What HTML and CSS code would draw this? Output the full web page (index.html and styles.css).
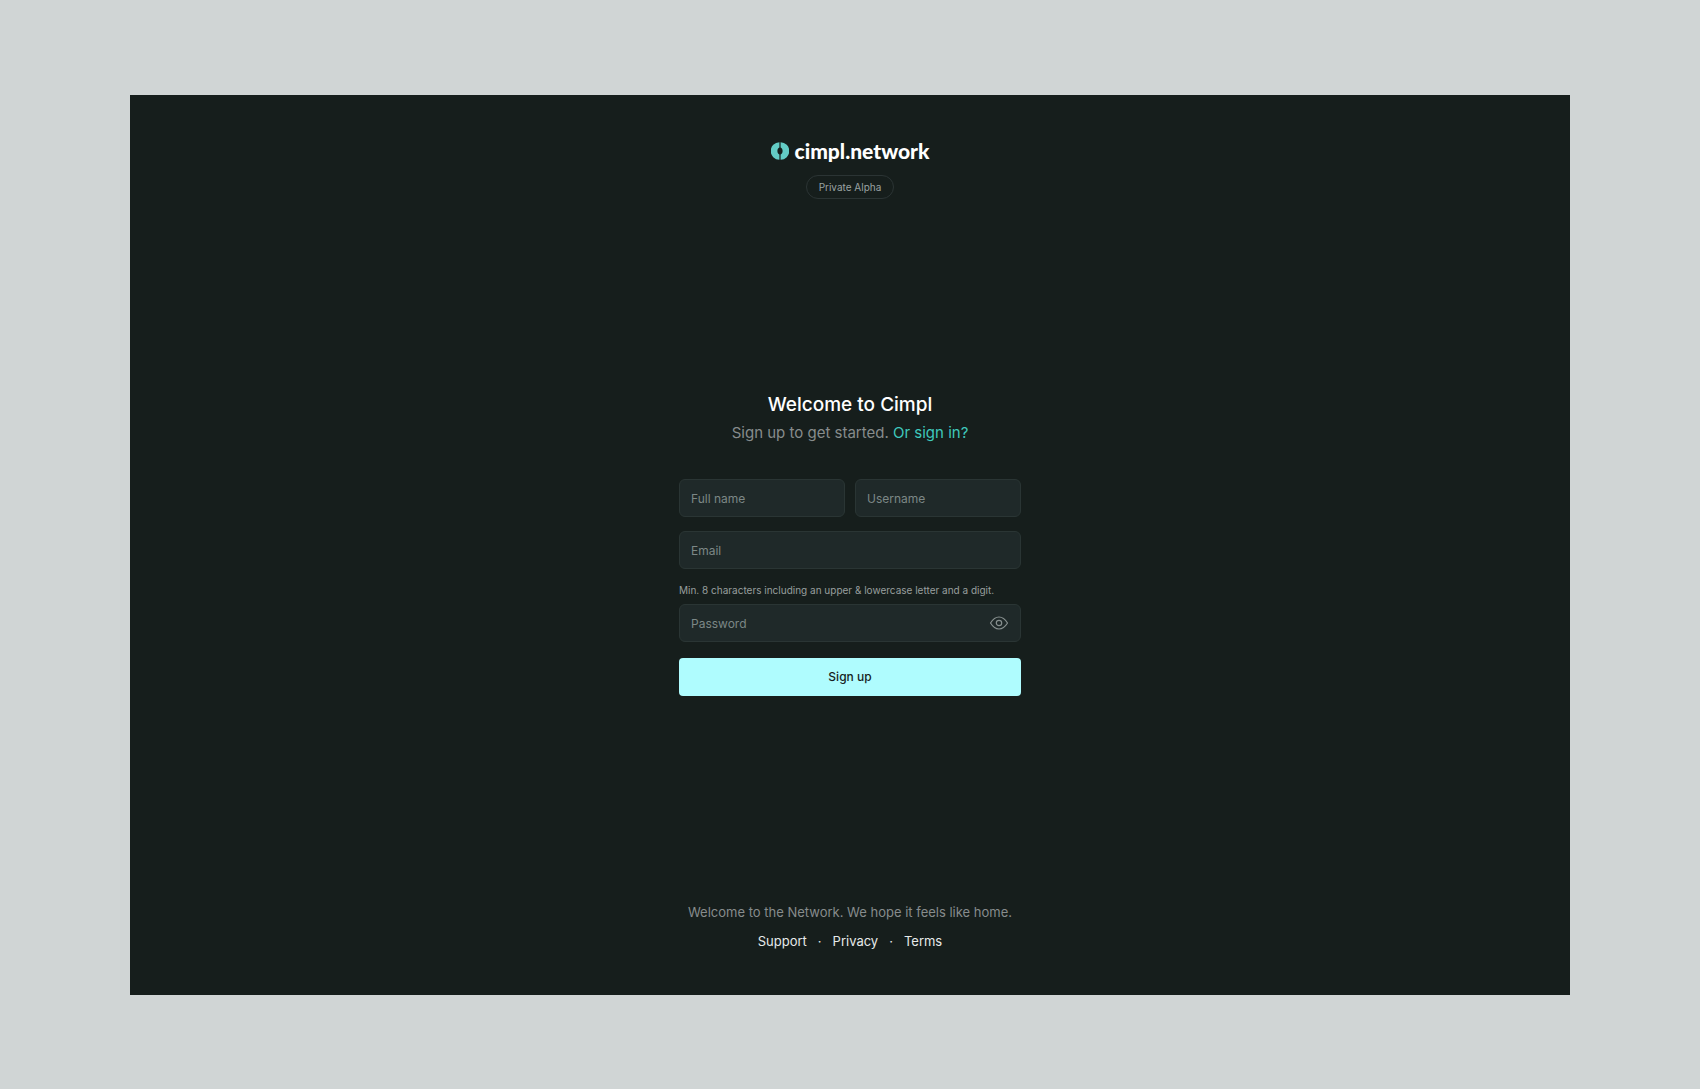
FILE: index.html
```html
<!DOCTYPE html>
<html lang="en">
<head>
    <meta charset="UTF-8">
    <meta name="viewport" content="width=device-width, initial-scale=1.0">
    <title>Sign up - cimpl.network</title>
    <link rel="stylesheet" href="styles.css">
</head>
<body>
    <div class="panel">
        <header class="header">
            <a href="#" class="logo">
                <svg class="logo-mark" viewBox="0 0 18 18" aria-hidden="true">
                    <path d="M8.400 0.300A8.700 8.700 0 0 0 8.400 17.700V12.400C7.200 12 6.400 10.600 6.400 9S7.200 6 8.400 5.600Z"/>
                    <path d="M9.600 0.300A8.700 8.700 0 0 1 9.600 17.700V12.400C10.800 12 11.600 10.600 11.600 9S10.800 6 9.600 5.600Z"/>
                </svg>
                <span class="logo-text">cimpl.network</span>
            </a>
            <span class="badge">Private Alpha</span>
        </header>

        <main class="signup">
            <h1>Welcome to Cimpl</h1>
            <p class="subtitle">Sign up to get started. <a href="#">Or sign in?</a></p>

            <form class="form">
                <div class="row">
                    <input type="text" class="field" placeholder="Full name" aria-label="Full name">
                    <input type="text" class="field" placeholder="Username" aria-label="Username">
                </div>
                <input type="email" class="field" placeholder="Email" aria-label="Email">
                <div class="password">
                    <label for="password">Min. 8 characters including an upper &amp; lowercase letter and a digit.</label>
                    <div class="password-box">
                        <input type="password" class="field" id="password" placeholder="Password">
                        <button type="button" class="toggle" aria-label="Show password">
                            <svg viewBox="0 0 20 16" aria-hidden="true">
                                <path d="M1.500 8C4 4 6.700 2 10 2s6 2 8.500 6c-2.500 4-5.200 6-8.500 6S4 12 1.500 8Z"/>
                                <circle cx="10" cy="8" r="2.700"/>
                            </svg>
                        </button>
                    </div>
                </div>
                <button type="submit" class="submit">Sign up</button>
            </form>
        </main>

        <footer class="footer">
            <p>Welcome to the Network. We hope it feels like home.</p>
            <nav class="links">
                <a href="#">Support</a>
                <span>·</span>
                <a href="#">Privacy</a>
                <span>·</span>
                <a href="#">Terms</a>
            </nav>
        </footer>
    </div>

    <script>
        const password = document.getElementById('password');

        document.querySelector('.toggle').addEventListener('click', () => {
            password.type = password.type === 'password' ? 'text' : 'password';
        });
    </script>
</body>
</html>
```

FILE: styles.css
```css
* {
    box-sizing: border-box;
}

body {
    font-family: Inter, 'Liberation Sans', Arial, sans-serif;
    display: flex;
    min-height: 100vh;
    margin: 0;
    padding: 95px 130px 94px;
    background: #d0d5d5;
}

h1,
p {
    margin: 0;
}

a {
    text-decoration: none;
}

.panel {
    flex: 1;
    display: flex;
    flex-direction: column;
    align-items: center;
    justify-content: space-between;
    padding: 44px 20px;
    background: #161e1c;
}

.header {
    display: flex;
    flex-direction: column;
    align-items: center;
    gap: 12px;
}

.logo {
    display: flex;
    align-items: center;
    gap: 6px;
    height: 24px;
    color: #fff;
}

.logo-mark {
    width: 18px;
    height: 18px;
    fill: #63ccc5;
}

.logo-text {
    font-family: Lato, sans-serif;
    font-size: 21px;
    font-weight: 900;
    line-height: 24px;
}

.badge {
    padding: 0 12px;
    border: 1px solid #2b3434;
    border-radius: 12px;
    font-size: 10px;
    line-height: 22px;
    color: #9aa3a2;
}

.signup {
    width: 100%;
    max-width: 342px;
    padding-bottom: 15px;
    text-align: center;
}

h1 {
    font-size: 19px;
    font-weight: 500;
    line-height: 28px;
    color: #fff;
}

.subtitle {
    margin-top: 2px;
    font-size: 15px;
    line-height: 24px;
    color: #878c8c;
}

.subtitle a {
    color: #3fc9bd;
}

.form {
    display: flex;
    flex-direction: column;
    gap: 14px;
    margin-top: 34px;
}

.row {
    display: grid;
    grid-template-columns: 1fr 1fr;
    gap: 10px;
}

.field {
    width: 100%;
    height: 38px;
    padding: 2px 11px 0;
    background: #1f2929;
    border: 1px solid #2a3534;
    border-radius: 6px;
    font-family: inherit;
    font-size: 12px;
    color: #fff;
}

.field::placeholder {
    color: #7c8786;
    opacity: 1;
}

.password label {
    display: block;
    margin-bottom: 7px;
    font-size: 10px;
    line-height: 14px;
    text-align: left;
    color: #989f9e;
}

.password-box {
    position: relative;
}

.toggle {
    position: absolute;
    top: 0;
    right: 0;
    display: flex;
    align-items: center;
    height: 100%;
    padding: 0 12px;
    background: none;
    border: none;
    cursor: pointer;
}

.toggle svg {
    width: 20px;
    height: 16px;
    fill: none;
    stroke: #87908f;
    stroke-width: 1.2;
    stroke-linejoin: round;
}

.submit {
    height: 38px;
    margin-top: 2px;
    background: #affcfe;
    border: none;
    border-radius: 4px;
    font-family: inherit;
    font-size: 12px;
    font-weight: 500;
    color: #171e1d;
    cursor: pointer;
}

.footer {
    text-align: center;
    font-size: 13px;
    line-height: 20px;
    color: #878c8c;
}

.links {
    display: flex;
    justify-content: center;
    gap: 11px;
    margin-top: 9px;
    color: #e6eaea;
}

.links a {
    color: #e6eaea;
}
```
